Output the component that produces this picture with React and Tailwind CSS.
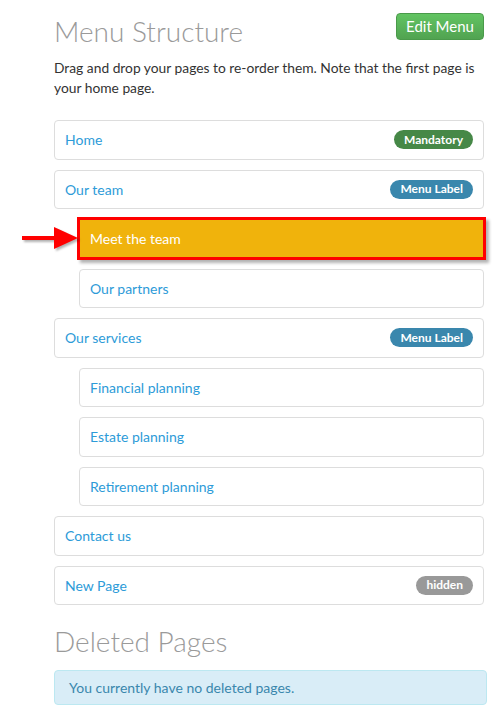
function Badge({ label, color }) {
  return (
    <span
      className={`rounded-full px-[10px] h-[19px] flex items-center text-[12px] font-bold text-white ${color}`}
    >
      {label}
    </span>
  );
}

function PageRow({ title, badge, badgeColor, child }) {
  return (
    <div
      className={`h-[39.5px] mb-[10px] flex items-center justify-between border border-[#dddddd] rounded-[4px] bg-white ${
        child ? "ml-[25px] pl-[10px]" : "pl-[10px]"
      } pr-[10px]`}
    >
      <span className="text-[14px] text-[#2d9bd8]">{title}</span>
      {badge && <Badge label={badge} color={badgeColor} />}
    </div>
  );
}

export default function App() {
  return (
    <div className="min-h-screen bg-white font-['Lato','Open_Sans',sans-serif] text-[#333]">
      <div className="pl-[54px] pt-[13px] w-[487px]">
        {/* Header */}
        <div className="flex items-start justify-between w-[430px]">
          <h1 className="text-[28px] leading-[36px] font-light text-[#9a9a9a]">Menu Structure</h1>
          <button className="h-[27px] w-[88px] rounded-[4px] border border-[#4a9a4a] bg-gradient-to-b from-[#62c462] to-[#51a351] text-white text-[15px]">
            Edit Menu
          </button>
        </div>
        <p className="mt-[9px] text-[13.8px] leading-[20px] w-[430px]">
          Drag and drop your pages to re-order them. Note that the first page is your home page.
        </p>

        {/* Menu list */}
        <div className="mt-[22px] w-[430px]">
          <PageRow title="Home" badge="Mandatory" badgeColor="bg-[#468847]" />
          <PageRow title="Our team" badge="Menu Label" badgeColor="bg-[#3a87ad]" />

          <div className="relative">
            <svg
              className="absolute left-[-32px] top-[8px] drop-shadow-[2px_2px_1px_rgba(0,0,0,0.3)]"
              width="58"
              height="26"
              viewBox="0 0 58 26"
            >
              <rect x="0" y="11" width="34" height="4" fill="#ff0000" />
              <polygon points="32,2 56,13 32,24" fill="#ff0000" />
            </svg>
            <div className="ml-[23px] -mr-[2px] -mt-[2px] mb-[8.5px] h-[43px] flex items-center pl-[10px] border-[3px] border-[#ff0000] bg-[#f0b30c] shadow-[3px_3px_3px_rgba(0,0,0,0.3)]">
              <span className="text-[14px] text-white">Meet the team</span>
            </div>
          </div>

          <PageRow title="Our partners" child />
          <PageRow title="Our services" badge="Menu Label" badgeColor="bg-[#3a87ad]" />
          <PageRow title="Financial planning" child />
          <PageRow title="Estate planning" child />
          <PageRow title="Retirement planning" child />
          <PageRow title="Contact us" />
          <PageRow title="New Page" badge="hidden" badgeColor="bg-[#999999]" />
        </div>

        {/* Deleted pages */}
        <h2 className="mt-[18px] text-[28px] leading-[36px] font-light text-[#9a9a9a]">Deleted Pages</h2>
        <div className="mt-[11px] h-[35px] w-[433px] flex items-center pl-[14px] rounded-[4px] border border-[#bce8f1] bg-[#d9edf7] text-[14px] text-[#3a87ad]">
          You currently have no deleted pages.
        </div>
      </div>
    </div>
  );
}
